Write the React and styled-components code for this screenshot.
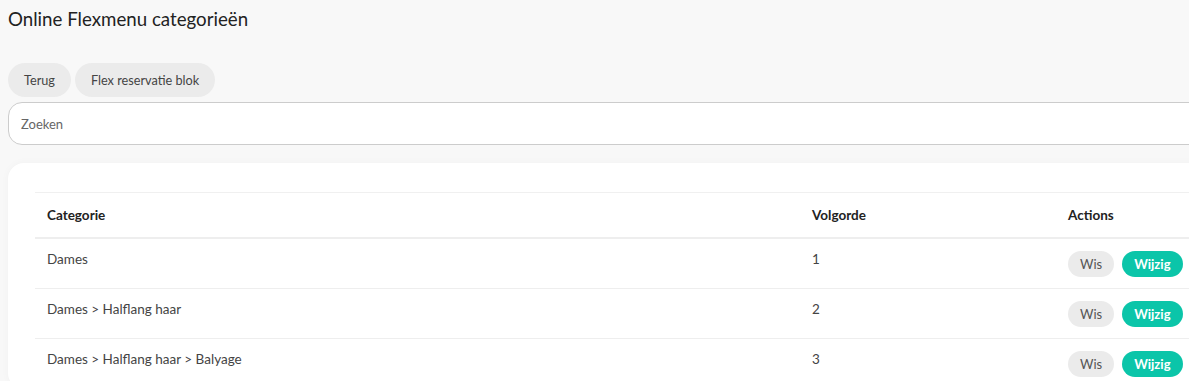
import React from 'react';
import styled, { createGlobalStyle } from 'styled-components';

/* ───────── global ───────── */

const GlobalStyle = createGlobalStyle`
  html, body {
    margin: 0;
    padding: 0;
    overflow: hidden;
    background: #f8f8f8;
  }
  body {
    font-family: Lato, "Noto Sans", sans-serif;
    color: #333333;
  }
`;

/* ───────── styled-components ───────── */

const Page = styled.div`
  width: 1236px;
  padding: 0 8px;
`;

const Title = styled.h1`
  font-size: 18.7px;
  font-weight: 400;
  color: #222222;
  margin: 0;
  padding: 8px 0 0 0;
  line-height: 22px;
`;

const ButtonRow = styled.div`
  display: flex;
  gap: 4px;
  margin-top: 33px;
`;

const PillButton = styled.button`
  height: 34px;
  padding: 0 16px;
  border: none;
  border-radius: 17px;
  background: #ebebeb;
  color: #444444;
  font-family: inherit;
  font-size: 12.7px;
  cursor: pointer;
`;

const SearchInput = styled.input`
  display: block;
  box-sizing: border-box;
  width: 100%;
  height: 43px;
  margin-top: 5px;
  padding: 0 12px;
  border: 1px solid #cccccc;
  border-radius: 14px;
  background: #ffffff;
  font-family: inherit;
  font-size: 13px;
  color: #333333;
  outline: none;

  &::placeholder {
    color: #666666;
  }
`;

const Card = styled.div`
  margin-top: 18px;
  background: #ffffff;
  border-radius: 16px;
  padding: 29px 27px 0 27px;
  box-shadow: 0 0 8px rgba(0, 0, 0, 0.03);
`;

const Table = styled.table`
  width: 100%;
  table-layout: fixed;
  border-collapse: collapse;
  font-size: 13.5px;
`;

const HeadCell = styled.th`
  text-align: left;
  font-weight: 700;
  color: #222222;
  height: 44px;
  padding: 0 12px;
  border-top: 1px solid #f0f0f0;
  border-bottom: 2px solid #eeeeee;
  width: ${({ $w }) => $w || 'auto'};
`;

const Row = styled.tr`
  border-bottom: 1px solid #eeeeee;
`;

const Cell = styled.td`
  height: 50px;
  box-sizing: border-box;
  padding: 12px 12px 0 12px;
  vertical-align: top;
  color: #444444;
`;

const ActionCell = styled(Cell)`
  padding-top: 12px;
`;

const Actions = styled.div`
  display: flex;
  gap: 8px;
`;

const SmallButton = styled.button`
  height: 26px;
  padding: 0 12px;
  border: none;
  border-radius: 13px;
  font-family: inherit;
  font-size: 13px;
  font-weight: ${({ $primary }) => ($primary ? 700 : 400)};
  background: ${({ $primary }) => ($primary ? '#0bc5a9' : '#ebebeb')};
  color: ${({ $primary }) => ($primary ? '#ffffff' : '#555555')};
  cursor: pointer;
`;

/* ───────── data ───────── */

const categories = [
  { name: 'Dames', order: 1 },
  { name: 'Dames > Halflang haar', order: 2 },
  { name: 'Dames > Halflang haar > Balyage', order: 3 },
];

/* ───────── component ───────── */

const App = () => {
  return (
    <>
      <GlobalStyle />
      <Page>
        <Title>Online Flexmenu categorieën</Title>

        <ButtonRow>
          <PillButton>Terug</PillButton>
          <PillButton>Flex reservatie blok</PillButton>
        </ButtonRow>

        <SearchInput placeholder="Zoeken" />

        <Card>
          <Table>
            <thead>
              <tr>
                <HeadCell $w="741px">Categorie</HeadCell>
                <HeadCell $w="232px">Volgorde</HeadCell>
                <HeadCell>Actions</HeadCell>
              </tr>
            </thead>
            <tbody>
              {categories.map((c) => (
                <Row key={c.order}>
                  <Cell>{c.name}</Cell>
                  <Cell>{c.order}</Cell>
                  <ActionCell>
                    <Actions>
                      <SmallButton>Wis</SmallButton>
                      <SmallButton $primary>Wijzig</SmallButton>
                    </Actions>
                  </ActionCell>
                </Row>
              ))}
            </tbody>
          </Table>
        </Card>
      </Page>
    </>
  );
};

export default App;
